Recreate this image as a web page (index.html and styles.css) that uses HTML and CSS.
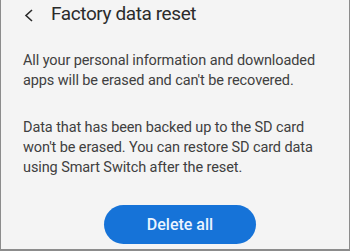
FILE: index.html
```html
<!DOCTYPE html>
<html lang="en">
  <head>
    <meta charset="UTF-8" />
    <meta name="viewport" content="width=device-width, initial-scale=1.0" />
    <title>Factory data reset</title>
    <link rel="stylesheet" href="styles.css">
  </head>
  <body>
    <div class="screen">
      <div class="header">
        <svg class="back" width="10" height="28" viewBox="0 0 10 28">
          <polyline points="8,10 2,15.5 8,21" fill="none" stroke="#2b2b2b" stroke-width="1.6" />
        </svg>
        <div class="title">Factory data reset</div>
      </div>

      <div class="content">
        <p>All your personal information and downloaded apps will be erased and can't be recovered.</p>
        <p>Data that has been backed up to the SD card won't be erased. You can restore SD card data using Smart Switch after the reset.</p>
      </div>

      <div class="actions">
        <button class="delete-btn">Delete all</button>
      </div>
    </div>
  </body>
</html>
```

FILE: styles.css
```css
body {
  margin: 0;
  padding: 0;
  font-family: Roboto, "Liberation Sans", sans-serif;
}
.screen {
  width: 350px;
  height: 251px;
  box-sizing: border-box;
  background-color: #f4f4f4;
  border-left: 1px solid #8c8c8c;
  border-right: 1px solid #8c8c8c;
  border-bottom: 2px solid #8c8c8c;
  overflow: hidden;
}
.header {
  display: flex;
  align-items: center;
  height: 28px;
  padding-left: 23px;
}
.back {
  display: block;
}
.title {
  margin-left: 17px;
  font-size: 19px;
  letter-spacing: -0.4px;
  line-height: 28px;
  color: #2b2b2b;
}
.content {
  padding: 23px 0 0 22px;
}
.content p {
  margin: 0 0 27px 0;
  width: 305px;
  font-size: 14.5px;
  letter-spacing: -0.1px;
  line-height: 20px;
  color: #404040;
}
.actions {
  padding-left: 103px;
  margin-top: 4px;
}
.delete-btn {
  width: 152px;
  height: 39px;
  border: none;
  border-radius: 20px;
  background-color: #1673d8;
  color: #eaf4ff;
  font-family: Roboto, "Liberation Sans", sans-serif;
  font-size: 16px;
  font-weight: 500;
}
```
